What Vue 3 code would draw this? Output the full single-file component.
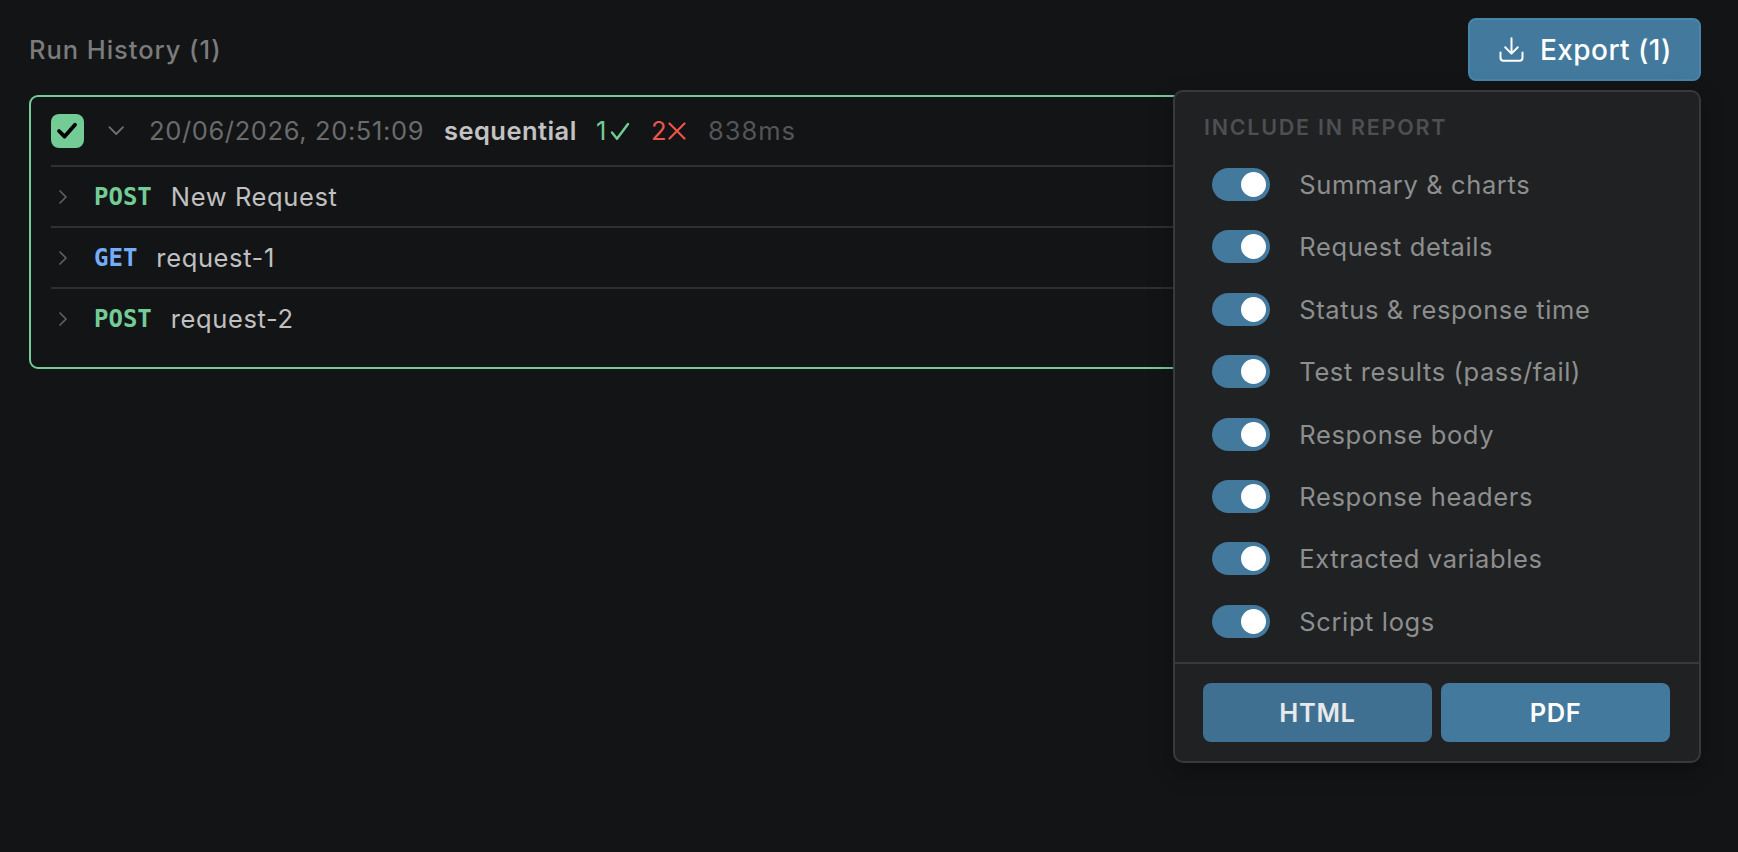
<script setup>
import { ref } from 'vue'

const requests = [
  { method: 'POST', name: 'New Request' },
  { method: 'GET', name: 'request-1' },
  { method: 'POST', name: 'request-2' },
]

const options = ref([
  { label: 'Summary & charts', on: true },
  { label: 'Request details', on: true },
  { label: 'Status & response time', on: true },
  { label: 'Test results (pass/fail)', on: true },
  { label: 'Response body', on: true },
  { label: 'Response headers', on: true },
  { label: 'Extracted variables', on: true },
  { label: 'Script logs', on: true },
])
</script>

<template>
  <main class="page">
    <header class="topbar">
      <h1 class="title">Run History (1)</h1>
      <div class="export">
        <button class="export-btn">
          <svg class="dl" width="25" height="27" viewBox="0 0 25 27" fill="none" stroke="#fff" stroke-width="2" stroke-linecap="round" stroke-linejoin="round">
            <path d="M12.5 2.2v15.4M6.2 11.2l6.3 6.4 6.3-6.4M1.5 16.4v5.4a3 3 0 0 0 3 3h16a3 3 0 0 0 3-3v-5.4" />
          </svg>
          <span class="export-label">Export (1)</span>
        </button>
        <section class="panel">
          <h2 class="panel-title">INCLUDE IN REPORT</h2>
          <ul class="options">
            <li v-for="o in options" :key="o.label" class="option" @click="o.on = !o.on">
              <span class="switch" :class="{ on: o.on }"><span class="knob"></span></span>
              <span class="option-label">{{ o.label }}</span>
            </li>
          </ul>
          <footer class="panel-foot">
            <button class="fmt dim">HTML</button>
            <button class="fmt">PDF</button>
          </footer>
        </section>
      </div>
    </header>

    <section class="run">
      <div class="run-head">
        <span class="check">
          <svg width="33" height="34" viewBox="0 0 33 34" fill="none" stroke="#000" stroke-width="3.8" stroke-linecap="round" stroke-linejoin="round">
            <path d="M8 17l5.6 5.6L24 10.8" />
          </svg>
        </span>
        <svg class="chev-down" width="18" height="12" viewBox="0 0 18 12" fill="none" stroke="#6f7071" stroke-width="1.8" stroke-linecap="round" stroke-linejoin="round">
          <path d="M2.4 2.2l6.8 6.8L16 2.2" />
        </svg>
        <span class="date">20/06/2026, 20:51:09</span>
        <span class="mode">sequential</span>
        <span class="pass">1<svg width="20" height="20" viewBox="0 0 20 20" fill="none" stroke="currentColor" stroke-width="2.4" stroke-linecap="round" stroke-linejoin="round"><path d="M2 11.5l5 6.3L18 3" /></svg></span>
        <span class="fail">2<svg width="18" height="18" viewBox="0 0 18 18" fill="none" stroke="currentColor" stroke-width="2.2" stroke-linecap="round"><path d="M1.5 1.5l15 15M16.5 1.5l-15 15" /></svg></span>
        <span class="time">838ms</span>
      </div>
      <div v-for="r in requests" :key="r.name" class="row">
        <svg class="chev" width="10" height="16" viewBox="0 0 10 16" fill="none" stroke="#5f6062" stroke-width="1.7" stroke-linecap="round" stroke-linejoin="round">
          <path d="M2 2l6 6-6 6" />
        </svg>
        <span class="method" :class="r.method.toLowerCase()">{{ r.method }}</span>
        <span class="name">{{ r.name }}</span>
      </div>
    </section>
  </main>
</template>

<style>
body {
  background: #121416;
}
</style>

<style scoped>
.page {
  box-sizing: border-box;
  height: 852px;
  padding: 18px 37px 0 29px;
  background: #121416;
  font-family: Inter, "Liberation Sans", sans-serif;
  font-size: 25.5px;
  line-height: 32px;
  letter-spacing: 0.62px;
  overflow: hidden;
}
h1, h2, ul { margin: 0; padding: 0; font: inherit; list-style: none; }
button { font: inherit; letter-spacing: inherit; padding: 0; margin: 0; border: 0; }
.topbar {
  display: flex;
  justify-content: space-between;
  align-items: center;
  height: 63px;
}
.title { color: #7b7b7b; font-weight: 500; letter-spacing: 0.95px; }
.export { position: relative; }
.export-btn {
  box-sizing: border-box;
  display: flex;
  align-items: center;
  width: 233px;
  height: 63px;
  padding-left: 29px;
  border: 2px solid #4785ab;
  border-radius: 8px;
  background: #42799c;
  color: #fff;
}
.dl { margin-right: 16px; }
.export-label { font-size: 28px; font-weight: 500; letter-spacing: 0.42px; white-space: nowrap; }
.panel {
  position: absolute;
  z-index: 5;
  right: 0;
  top: 72px;
  box-sizing: border-box;
  width: 528px;
  height: 673px;
  border: 2px solid #38393b;
  border-radius: 10px;
  background: #202123;
  box-shadow: 0 8px 24px rgba(0, 0, 0, 0.3);
}
.panel-title {
  padding: 19px 0 0 29px;
  height: 32px;
  line-height: 32px;
  font-size: 21.5px;
  font-weight: 600;
  letter-spacing: 1.75px;
  color: #4e4f50;
}
.options { box-sizing: border-box; padding-top: 10.4px; height: 519px; }
.option {
  display: flex;
  align-items: center;
  gap: 29px;
  height: 62.4px;
  padding-left: 37.3px;
}
.switch {
  box-sizing: border-box;
  width: 58px;
  height: 33px;
  padding: 4px;
  border-radius: 17px;
  background: #3a3b3d;
  display: flex;
}
.switch.on { background: #42799c; justify-content: flex-end; }
.knob { width: 25px; height: 25px; border-radius: 50%; background: #fff; }
.option-label { padding-top: 1px; color: #8d8e8e; }
.panel-foot {
  display: flex;
  gap: 9px;
  padding: 19px 29px 0 28px;
  border-top: 2px solid #38393b;
}
.fmt {
  flex: 1;
  height: 59px;
  border-radius: 8px;
  background: #42799c;
  color: #fff;
  font-weight: 600;
}
.fmt.dim { background: #3f7091; color: #e8e9ea; }
.run {
  box-sizing: border-box;
  height: 274px;
  margin-top: 14px;
  padding: 0 20px;
  border: 2px solid #73cc96;
  border-radius: 9px;
}
.run-head { display: flex; align-items: center; height: 68px; white-space: nowrap; }
.check {
  width: 33px;
  height: 34px;
  border-radius: 8px;
  background: #73cc96;
}
.check svg { display: block; }
.chev-down { margin: 0 24px 0 23px; }
.date { width: 295px; color: #6b6b6b; }
.mode { width: 152px; color: #c2c2c2; font-weight: 600; letter-spacing: 0.45px; }
.pass { width: 55px; color: #73cc96; display: flex; align-items: center; gap: 3px; }
.fail { width: 57px; color: #ee5448; display: flex; align-items: center; gap: 1px; }
.time { color: #555556; letter-spacing: 0.95px; }
.row {
  box-sizing: border-box;
  display: flex;
  align-items: center;
  height: 61px;
  padding-left: 7px;
  border-top: 2px solid #2f3032;
}
.chev { margin-right: 26px; }
.method {
  margin-right: 19px;
  font-family: "DejaVu Sans Mono", monospace;
  font-size: 24px;
  font-weight: 700;
  letter-spacing: 0;
}
.post { color: #73cc96; }
.get { color: #76adf9; }
.name { color: #c0c0c0; }
</style>
